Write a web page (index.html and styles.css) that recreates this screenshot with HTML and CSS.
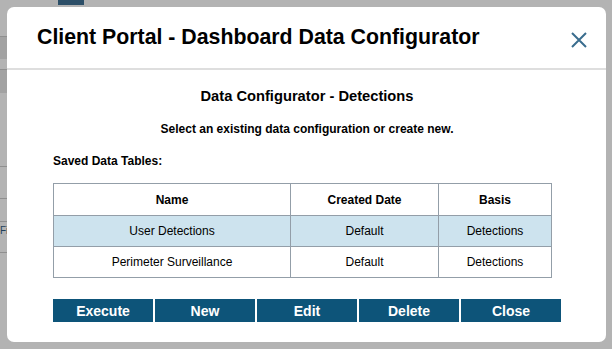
FILE: index.html
```html
<!DOCTYPE html>
<html>
<head>
  <meta charset="UTF-8">
  <title>Client Portal - Dashboard Data Configurator</title>
  <link rel="stylesheet" href="styles.css">
</head>
<body>
  <!-- Pagina de fondo, tapada por el overlay -->
  <div class="fondo">
    <div class="fondo-tab"></div>
    <div class="fondo-lineas">
      <span></span><span></span><span></span><span></span><span class="fi">Fi</span><span></span>
    </div>
  </div>

  <div class="modal">
    <header class="modal-header">
      <h1>Client Portal - Dashboard Data Configurator</h1>
      <button class="cerrar" aria-label="Close">
        <svg width="18" height="18" viewBox="0 0 18 18">
          <path d="M2 2 L16 16 M16 2 L2 16" stroke="#3a6d8e" stroke-width="2" fill="none"/>
        </svg>
      </button>
    </header>

    <section class="modal-body">
      <h2>Data Configurator - Detections</h2>
      <p class="intro">Select an existing data configuration or create new.</p>
      <p class="etiqueta">Saved Data Tables:</p>

      <table class="tabla">
        <thead>
          <tr>
            <th class="col-nombre">Name</th>
            <th class="col-fecha">Created Date</th>
            <th>Basis</th>
          </tr>
        </thead>
        <tbody>
          <tr class="seleccionada">
            <td>User Detections</td>
            <td>Default</td>
            <td>Detections</td>
          </tr>
          <tr>
            <td>Perimeter Surveillance</td>
            <td>Default</td>
            <td>Detections</td>
          </tr>
        </tbody>
      </table>

      <div class="botones">
        <button class="boton">Execute</button>
        <button class="boton">New</button>
        <button class="boton">Edit</button>
        <button class="boton">Delete</button>
        <button class="boton">Close</button>
      </div>
    </section>
  </div>
</body>
</html>
```

FILE: styles.css
```css
/* Estilos generales */
body {
  font-family: 'Liberation Sans', Arial, sans-serif;
  margin: 0;
  padding: 7px 6px 7px 7px;
  background-color: #b3b3b3;
  color: #000;
  position: relative;
  overflow: hidden;
}

/* Pagina de fondo */
.fondo {
  position: absolute;
  top: 0;
  left: 0;
  right: 0;
  bottom: 0;
}

.fondo-tab {
  position: absolute;
  top: 0;
  left: 58px;
  width: 26px;
  height: 5px;
  background-color: #2c4f68;
}

.fondo-lineas span {
  position: absolute;
  left: 0;
  width: 7px;
  border-top: 1px solid #8f8f8f;
}

.fondo-lineas span:nth-child(1) { top: 36px; height: 22px; background-color: #a2a2a2; }
.fondo-lineas span:nth-child(2) { top: 69px; height: 23px; background-color: #a2a2a2; }
.fondo-lineas span:nth-child(3) { top: 166px; }
.fondo-lineas span:nth-child(4) { top: 198px; }
.fondo-lineas span:nth-child(6) { top: 252px; }

.fondo-lineas .fi {
  top: 221px;
  width: auto;
  font-size: 10px;
  line-height: 18px;
  color: #1f3f5a;
}

/* Ventana modal */
.modal {
  position: relative;
  width: 599px;
  height: 335px;
  background-color: #fff;
  border-radius: 7px;
  display: flex;
  flex-direction: column;
}

.modal-header {
  height: 61px;
  border-bottom: 2px solid #dedede;
  display: flex;
  align-items: center;
  justify-content: space-between;
  padding: 0 18px 0 30px;
}

.modal-header h1 {
  margin: 0;
  font-size: 21.3px;
  font-weight: bold;
  padding-bottom: 1px;
}

.cerrar {
  background: none;
  border: none;
  padding: 0;
  width: 18px;
  height: 18px;
  margin-top: 5px;
  cursor: pointer;
}

.modal-body {
  padding: 12px 0 0 46px;
}

.modal-body h2 {
  margin: 5px 0 0;
  width: 508px;
  padding-right: 6px;
  text-align: center;
  font-size: 14.7px;
  line-height: 18px;
}

.intro {
  margin: 17px 0 0;
  width: 508px;
  padding-right: 6px;
  text-align: center;
  font-size: 12px;
  font-weight: bold;
  line-height: 15px;
}

.etiqueta {
  margin: 17px 0 0;
  font-size: 12px;
  font-weight: bold;
  line-height: 15px;
}

/* Tabla de datos guardados */
.tabla {
  margin-top: 14px;
  width: 499px;
  border-collapse: collapse;
  font-size: 12px;
}

.tabla th,
.tabla td {
  border: 1px solid #939ea8;
  height: 30px;
  padding: 0;
  text-align: center;
}

.tabla th {
  font-weight: bold;
  height: 31px;
}

.col-nombre {
  width: 236px;
}

.col-fecha {
  width: 147px;
}

.seleccionada td {
  background-color: #cde3ee;
}

/* Botones */
.botones {
  margin-top: 21px;
  display: flex;
  gap: 2px;
}

.boton {
  width: 100px;
  height: 23px;
  padding: 0;
  border: none;
  background-color: #0d5479;
  color: #fff;
  font-family: 'Liberation Sans', Arial, sans-serif;
  font-size: 14px;
  font-weight: bold;
  cursor: pointer;
}

.boton:hover {
  background-color: #13668f;
}
```
